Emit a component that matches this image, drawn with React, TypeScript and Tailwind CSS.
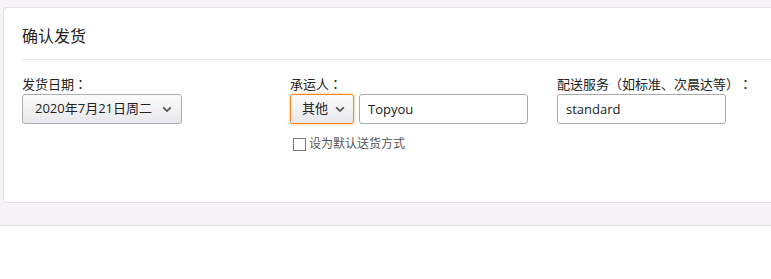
import { useState } from "react";

const font = { fontFamily: '"Open Sans", "Noto Sans CJK SC", sans-serif' };

// full-width punctuation drawn centred, as in the screenshot
function P({ c }: { c: string }) {
  return <span className="font-['Noto_Sans_CJK_TC',sans-serif]">{c}</span>;
}

function Chevron() {
  return (
    <svg width="10" height="7" viewBox="0 0 10 7" className="shrink-0">
      <path d="M1.2 1.3l3.8 3.8 3.8-3.8" fill="none" stroke="#555" strokeWidth="1.8" />
    </svg>
  );
}

export default function App() {
  const [isDefault, setIsDefault] = useState(false);

  return (
    <div className="min-h-[279px] bg-white text-[#222] [text-spacing-trim:space-all]" style={font}>
      <div className="bg-[#f6f3f6] pt-[7px] pl-[3px] pb-[22px] border-b border-[#dedcde]">
        <div className="h-[196px] bg-white border border-r-0 border-[#e2e0e2] rounded-l-[4px]">
          {/* header */}
          <div className="pl-[18px]">
            <div className="h-[51px] flex items-center text-[16px] pt-[5px]">确认发货</div>
            <div className="border-t border-[#e4e4e4]" />
          </div>

          {/* form row */}
          <div className="flex pl-[18px] pt-[15px]">
            <div className="w-[268px]">
              <div className="text-[13px] leading-[18px] mb-[1px]">
                发货日期<P c="：" />
              </div>
              <button className="w-[160px] h-[30px] flex items-center justify-between pl-[12px] pr-[9px] border border-[#adadad] rounded-[3px] bg-gradient-to-b from-[#fbfbfb] to-[#e8e8ec] text-[13px]">
                <span>2020年7月21日周二</span>
                <Chevron />
              </button>
            </div>

            <div className="w-[267px]">
              <div className="text-[13px] leading-[18px] mb-[1px]">
                承运人<P c="：" />
              </div>
              <div className="flex gap-[5px]">
                <button className="w-[64px] h-[30px] flex items-center justify-between pl-[11px] pr-[8px] border border-[#f08a1e] rounded-[3px] bg-gradient-to-b from-[#fbfbfb] to-[#e8e8ec] text-[13px] shadow-[0_0_3px_#f7b36b]">
                  <span>其他</span>
                  <Chevron />
                </button>
                <input
                  defaultValue="Topyou"
                  className="w-[169px] h-[30px] px-[8px] border border-[#a9a9a9] rounded-[3px] text-[13px] outline-none"
                />
              </div>
              <label className="flex items-center gap-[3px] mt-[11px] ml-[3px] text-[12px] text-[#555]">
                <span
                  onClick={() => setIsDefault(!isDefault)}
                  className="w-[13px] h-[13px] border border-[#777] bg-white"
                />
                设为默认送货方式
              </label>
            </div>

            <div>
              <div className="text-[13px] leading-[18px] mb-[1px]">
                配送服务<P c="（" />如标准、次晨达等<P c="）" />
                <P c="：" />
              </div>
              <input
                defaultValue="standard"
                className="w-[169px] h-[30px] px-[8px] border border-[#a9a9a9] rounded-[3px] text-[13px] outline-none"
              />
            </div>
          </div>
        </div>
      </div>
    </div>
  );
}
